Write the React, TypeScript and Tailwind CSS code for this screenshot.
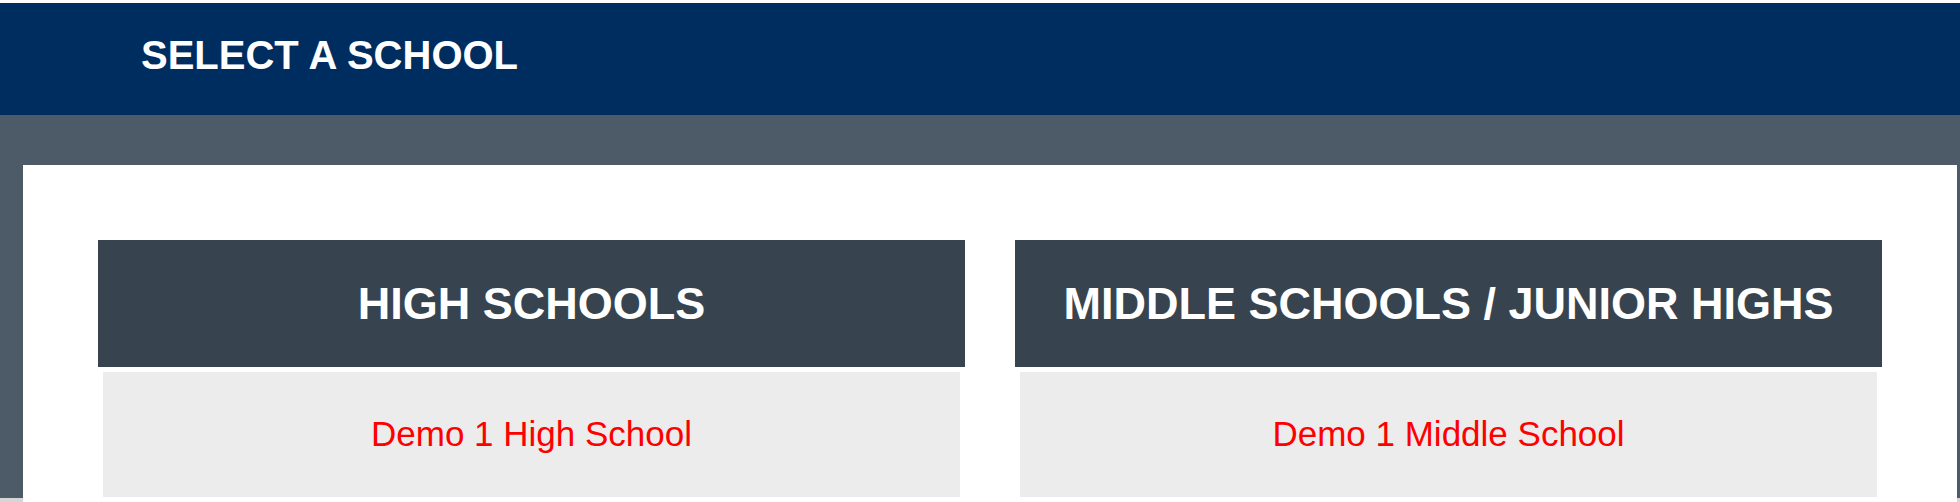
const groups = [
  { title: 'HIGH SCHOOLS', schools: ['Demo 1 High School'] },
  { title: 'MIDDLE SCHOOLS / JUNIOR HIGHS', schools: ['Demo 1 Middle School'] },
]

function SchoolGroup({ title, schools }: { title: string; schools: string[] }) {
  return (
    <div className="flex flex-col">
      <div className="h-[127px] bg-[#37444f] flex items-center justify-center">
        <h2 className="text-[45px] leading-none font-bold text-white">{title}</h2>
      </div>
      <ul className="flex flex-col gap-[5px] pt-[5px] px-[5px]">
        {schools.map((name) => (
          <li key={name} className="h-[125px] bg-[#ececec] flex items-center justify-center">
            <a href="#" className="text-[35px] text-[#ff0000]">
              {name}
            </a>
          </li>
        ))}
      </ul>
    </div>
  )
}

export default function App() {
  return (
    <div className="min-h-[502px] bg-white pt-[3px] font-['Liberation_Sans',Arial,sans-serif]">
      <header className="h-[112px] bg-[#002d5f] pt-[32px] pl-[141px]">
        <h1 className="text-[40px] leading-none font-bold text-white">SELECT A SCHOOL</h1>
      </header>
      <div className="bg-[#4d5a67] pt-[50px] pl-[23px] pr-[3px]">
        <div className="bg-white h-[333px] px-[75px] pt-[75px]">
          <div className="grid grid-cols-2 gap-[50px]">
            {groups.map((g) => (
              <SchoolGroup key={g.title} title={g.title} schools={g.schools} />
            ))}
          </div>
        </div>
      </div>
      <div className="flex h-[4px]">
        <div className="w-[23px] bg-[#d6d6d6]" />
        <div className="flex-1 bg-white" />
        <div className="w-[3px] bg-[#d6d6d6]" />
      </div>
    </div>
  )
}
